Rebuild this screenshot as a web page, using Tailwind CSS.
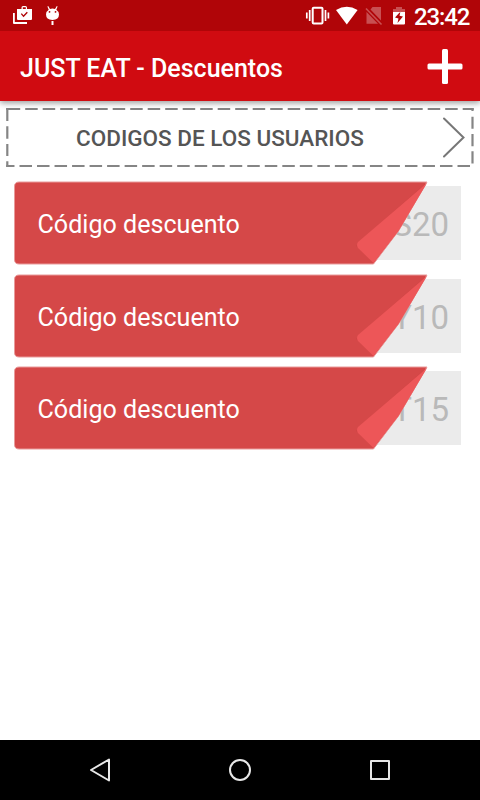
<!DOCTYPE html>
<html lang="es">
<head>
  <meta charset="UTF-8">
  <meta name="viewport" content="width=device-width, initial-scale=1.0">
  <title>JUST EAT - Descuentos</title>
  <script src="https://cdn.jsdelivr.net/npm/@tailwindcss/browser@4"></script>
</head>
<body class="bg-white font-['Roboto',sans-serif]">
  <div class="w-[480px] h-[800px] flex flex-col overflow-hidden">

    <!-- Status bar -->
    <div class="relative z-20 h-[31px] shrink-0 bg-[#b00508] text-white flex items-center">
      <svg class="w-[120px] h-[31px]" viewBox="0 0 120 31" fill="#fff">
        <path fill-rule="evenodd" d="M17 9h4.500V7.500q0-1.500 1.500-1.500h2.500q1.500 0 1.500 1.500V9H32v10q0 1-1 1H18q-1 0-1-1ZM22.800 9h3V7.300h-3ZM20.800 14l2.700 3.200 4.300-4.500-1-.9-3.300 3.400-1.700-2Z"/>
        <path d="M13 13h1.800v9H27v2H14q-1 0-1-1Z"/>
        <path fill-rule="evenodd" d="M48.200 6l1.800 3q2.500-1 5 0l1.800-3 .8.500-1.300 3.200q2.700 1.700 2.700 4.700 0 5-6.500 5.600-6.500-.6-6.500-5.600 0-3 2.700-4.700L47.400 6.500ZM49.500 11a.9.900 0 1 0 .1 1.800.9.900 0 0 0-.1-1.800ZM55.500 11a.9.900 0 1 0 .1 1.800.9.900 0 0 0-.1-1.800Z"/>
        <path d="M51.500 21h2v4h-2z"/>
      </svg>
      <svg class="ml-[180px] w-[114px] h-[31px]" viewBox="300 0 114 31">
        <g fill="none" stroke="#fff" stroke-width="1.700">
          <rect x="312.700" y="7.800" width="9.800" height="15.800" rx="1" stroke-width="2"/>
          <path d="M309.700 10v11M306.800 12.500v6M325.500 10v11M328.400 12.500v6"/>
        </g>
        <path fill="#fff" d="M336 10q10.800-6.500 21.600 0L346.800 24.500Z"/>
        <path fill="#c85052" d="M372.500 7H381v13.500L370.500 9.500ZM366.500 12L378 23.700H366.500Z"/>
        <path stroke="#c85052" stroke-width="1.600" d="M366 8.500L381.500 24.500"/>
        <path fill="#c85052" d="M396 7h6v2h3v4H393V9h3z"/>
        <path fill="#fff" fill-rule="evenodd" d="M393 12h12v11.500q0 1-1 1H394q-1 0-1-1ZM400.500 11.500L395 17.500l3.500 1L397.500 23l5.500-6.500-3.500-.7Z"/>
      </svg>
      <span class="text-[24px] leading-[31px] font-medium tracking-[-1.1px] whitespace-nowrap pt-[3px]">23:42</span>
    </div>

    <!-- App bar -->
    <header class="relative z-10 h-[70px] shrink-0 bg-[#d00b11] flex items-center justify-between pl-5 pr-[17px] shadow-[0_2px_6px_rgba(0,0,0,0.4)]">
      <h1 class="text-white text-[25px] leading-[30px] font-medium whitespace-nowrap pt-[5px]">JUST EAT - Descuentos</h1>
      <svg class="w-9 h-9" viewBox="0 0 36 36" fill="#fff">
        <rect x="0.500" y="15.500" width="35" height="6" rx="1.500"/>
        <rect x="15" y="1" width="6" height="35" rx="1.500"/>
      </svg>
    </header>

    <main class="flex-1">
      <!-- User codes row with dashed frame -->
      <div class="relative h-[74px] flex items-center">
        <svg class="absolute inset-0 w-full h-[74px]" viewBox="0 101 480 74" fill="none" stroke="#858585" stroke-width="2.200">
          <path stroke-dasharray="14 5 12.500 5 12.500 5 12.500 5 12.500 5 12.500 5 12.500 5 12.500 5 12.500 5 12.500 5 12.500 5 12.500 5 12.500 5 12.500 5 12.500 5 12.500 5 12.500 5 12.500 5 12.500 5 12.500 5 12.500 5 12.500 5 12.500 5 12.500 5 12.500 5 12.500 5 12.500 5" d="M6.200 109H473.700"/>
          <path d="M472.500 108v3M472.500 116.700v12M472.500 134v12.200M472.500 151.300v12.200"/>
          <path stroke-dasharray="12.500 5.020" d="M470 166H6.200"/>
          <path d="M7.300 108v13M7.300 126.300v12.400M7.300 144v12M7.300 161.300v5.700"/>
          <path stroke="#777" stroke-width="2" stroke-linecap="round" d="M444 118.500L463.500 137.500 444 156.500"/>
        </svg>
        <span class="pl-[76px] text-[22.500px] leading-[26px] font-medium text-[#555] whitespace-nowrap">CODIGOS DE LOS USUARIOS</span>
      </div>

      <!-- Discount coupons -->
      <ul class="pl-[13px] pt-[5px] flex flex-col gap-[7.500px]">
        <li class="relative w-[448px] h-[85px] pt-[6px]">
          <div class="h-[74px] bg-[#ebebeb] ml-4 flex items-center justify-end pr-[12px] text-[33px] text-[#b9b9b9] pt-[4px]">JES20</div>
          <svg class="absolute inset-0 w-[420px] h-[85px]" viewBox="0 0 420 85">
            <path fill="#d54848" stroke="#e99a9a" d="M6 2H414L385.500 51 360.500 84H6Q1.500 84 1.500 79.500V6.500Q1.500 2 6 2Z"/>
            <path fill="#cd4343" d="M413 3L346 62 361 83 352 72 343 66Z"/>
            <path fill="#ed5658" d="M414 3L345 62Q343 65 345 68L360.500 83 385.500 51Z"/>
          </svg>
          <span class="absolute left-[24.500px] top-[30px] text-[25.100px] leading-[30px] text-white whitespace-nowrap">Código descuento</span>
        </li>
        <li class="relative w-[448px] h-[85px] pt-[6px]">
          <div class="h-[74px] bg-[#ebebeb] ml-4 flex items-center justify-end pr-[12px] text-[33px] text-[#b9b9b9] pt-[4px]">JEY10</div>
          <svg class="absolute inset-0 w-[420px] h-[85px]" viewBox="0 0 420 85">
            <path fill="#d54848" stroke="#e99a9a" d="M6 2H414L385.500 51 360.500 84H6Q1.500 84 1.500 79.500V6.500Q1.500 2 6 2Z"/>
            <path fill="#cd4343" d="M413 3L346 62 361 83 352 72 343 66Z"/>
            <path fill="#ed5658" d="M414 3L345 62Q343 65 345 68L360.500 83 385.500 51Z"/>
          </svg>
          <span class="absolute left-[24.500px] top-[30px] text-[25.100px] leading-[30px] text-white whitespace-nowrap">Código descuento</span>
        </li>
        <li class="relative w-[448px] h-[85px] pt-[6px]">
          <div class="h-[74px] bg-[#ebebeb] ml-4 flex items-center justify-end pr-[12px] text-[33px] text-[#b9b9b9] pt-[4px]">JET15</div>
          <svg class="absolute inset-0 w-[420px] h-[85px]" viewBox="0 0 420 85">
            <path fill="#d54848" stroke="#e99a9a" d="M6 2H414L385.500 51 360.500 84H6Q1.500 84 1.500 79.500V6.500Q1.500 2 6 2Z"/>
            <path fill="#cd4343" d="M413 3L346 62 361 83 352 72 343 66Z"/>
            <path fill="#ed5658" d="M414 3L345 62Q343 65 345 68L360.500 83 385.500 51Z"/>
          </svg>
          <span class="absolute left-[24.500px] top-[30px] text-[25.100px] leading-[30px] text-white whitespace-nowrap">Código descuento</span>
        </li>
      </ul>
    </main>

    <!-- Navigation bar -->
    <nav class="h-[60px] shrink-0 bg-black flex items-center justify-between px-[88px]">
      <svg class="w-6 h-6" viewBox="0 0 24 24" fill="none" stroke="#e8e8e8" stroke-width="2" stroke-linejoin="round"><path d="M21 1.500V22.500L3 12Z"/></svg>
      <svg class="w-6 h-6" viewBox="0 0 24 24" fill="none" stroke="#e8e8e8" stroke-width="2"><circle cx="12" cy="12" r="10"/></svg>
      <svg class="w-6 h-6" viewBox="0 0 24 24" fill="none" stroke="#e8e8e8" stroke-width="2" stroke-linejoin="round"><rect x="3" y="3" width="18" height="18"/></svg>
    </nav>
  </div>
</body>
</html>
